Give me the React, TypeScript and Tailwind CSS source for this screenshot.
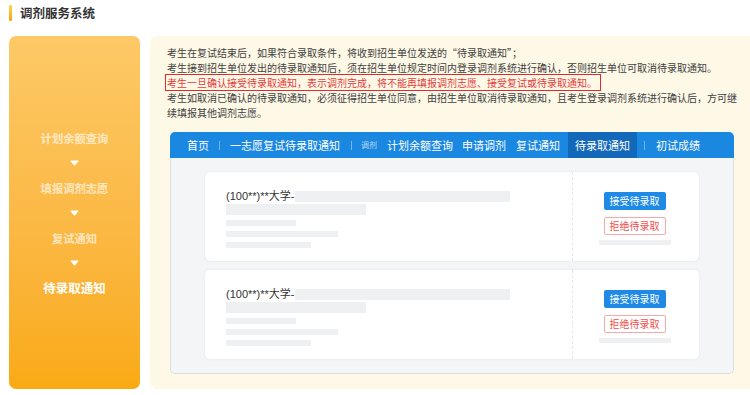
import React from 'react';

const steps = ['计划余额查询', '填报调剂志愿', '复试通知'];

const DownArrow: React.FC = () => (
  <svg width="9" height="6" viewBox="0 0 9 6" className="block">
    <path d="M1 0.6 H8 Q8.8 0.6 8.3 1.3 L5.1 5.2 Q4.5 5.9 3.9 5.2 L0.7 1.3 Q0.2 0.6 1 0.6 Z" fill="#ffffff" />
  </svg>
);

const Sep: React.FC<{ className?: string }> = ({ className = '' }) => (
  <span className={`block w-px h-[9px] bg-white/40 ${className}`} />
);

const OfferCard: React.FC = () => (
  <div className="flex h-[89px] bg-white rounded-[5px] shadow-[0_0_3px_rgba(0,0,0,0.07)]">
    <div className="w-[367px] pl-[21px] pt-[18px] flex flex-col">
      <div className="flex items-center h-[12px]">
        <span className="text-[11px] leading-[12px] text-[#333] font-['Liberation_Sans','Noto_Sans_CJK_SC',sans-serif]">(100**)**大学-</span>
        <span className="block ml-[1px] w-[215px] h-[11px] bg-[#eff0f2]" />
      </div>
      <span className="block mt-[2px] w-[140px] h-[11px] bg-[#eff0f2]" />
      <span className="block mt-[5px] w-[70px] h-[6px] bg-[#eff0f2]" />
      <span className="block mt-[5px] w-[112px] h-[6px] bg-[#eff0f2]" />
      <span className="block mt-[5px] w-[85px] h-[6px] bg-[#eff0f2]" />
    </div>
    <div className="flex-1 border-l border-dashed border-[#e4e6ea] flex flex-col items-center pt-[20px] pr-[3px]">
      <button className="w-[62px] h-[18px] rounded-[2px] bg-[#1e8ae6] text-white text-[10px] leading-[18px]">接受待录取</button>
      <button className="mt-[7px] w-[62px] h-[18px] rounded-[2px] bg-white border border-[#f6a9a9] text-[#f0504c] text-[10px] leading-[16px]">拒绝待录取</button>
      <span className="block mt-[5px] w-[72px] h-[5px] bg-[#eff0f2]" />
    </div>
  </div>
);

export default function App() {
  return (
    <div className="w-[750px] h-[395px] bg-white overflow-hidden font-['Noto_Sans_CJK_SC',sans-serif]">
      {/* header */}
      <div className="flex items-center pt-[5px] pl-[9px]">
        <span className="block w-[3px] h-[16px] rounded-[1px] bg-gradient-to-b from-[#ffd24d] to-[#f7a40a]" />
        <span className="ml-[8px] text-[12.5px] font-bold text-[#333] leading-[16px]">调剂服务系统</span>
      </div>

      <div className="flex mt-[15px] pl-[9px] h-[353px]">
        {/* left steps */}
        <div className="w-[131px] rounded-[7px] bg-gradient-to-b from-[#fdc966] to-[#f9aa12] flex flex-col items-center pt-[94px]">
          {steps.map((s) => (
            <React.Fragment key={s}>
              <div className="text-[11.3px] leading-[16px] font-semibold text-white/65">{s}</div>
              <div className="h-[34px] flex items-center">
                <DownArrow />
              </div>
            </React.Fragment>
          ))}
          <div className="text-[12.5px] leading-[16px] font-bold text-white">待录取通知</div>
        </div>

        {/* right content */}
        <div className="flex-1 ml-[10px] rounded-l-[7px] bg-[#fef8e7] pl-[17px] pt-[9px]">
          <div className="w-[575px] text-[10px] leading-[15px] text-[#404040]">
            <div>考生在复试结束后，如果符合录取条件，将收到招生单位发送的“待录取通知”；</div>
            <div>考生接到招生单位发出的待录取通知后，须在招生单位规定时间内登录调剂系统进行确认，否则招生单位可取消待录取通知。</div>
            <div className="w-fit -ml-[1px] pl-[1px] pr-[3px] text-[#e23c3c] outline-[1.5px] outline-solid outline-[#e0282e]">
              考生一旦确认接受待录取通知，表示调剂完成，将不能再填报调剂志愿、接受复试或待录取通知。
            </div>
            <div>考生如取消已确认的待录取通知，必须征得招生单位同意，由招生单位取消待录取通知，且考生登录调剂系统进行确认后，方可继续填报其他调剂志愿。</div>
          </div>

          <div className="ml-[3px] mt-[12px] w-[564px]">
            {/* nav */}
            <div className="h-[26px] rounded-t-[5px] bg-[#1a87e0] flex items-center pl-[17px] text-[11px] text-white leading-[26px]">
              <span>首页</span>
              <Sep className="ml-[10px]" />
              <span className="ml-[10px]">一志愿复试待录取通知</span>
              <Sep className="ml-[11px]" />
              <span className="ml-[9px] text-[8px] text-white/70">调剂</span>
              <span className="ml-[10px]">计划余额查询</span>
              <span className="ml-[9px]">申请调剂</span>
              <span className="ml-[10px]">复试通知</span>
              <span className="ml-[8px] px-[7px] bg-[#1468ba] h-[26px]">待录取通知</span>
              <Sep className="ml-[7px]" />
              <span className="ml-[11px]">初试成绩</span>
            </div>
            {/* list */}
            <div className="h-[216px] bg-[#f4f5f7] rounded-b-[5px] border-x border-b border-[#dcdee3] px-[34px] pt-[14px] flex flex-col gap-[9px]">
              <OfferCard />
              <OfferCard />
            </div>
          </div>
        </div>
      </div>
    </div>
  );
}
